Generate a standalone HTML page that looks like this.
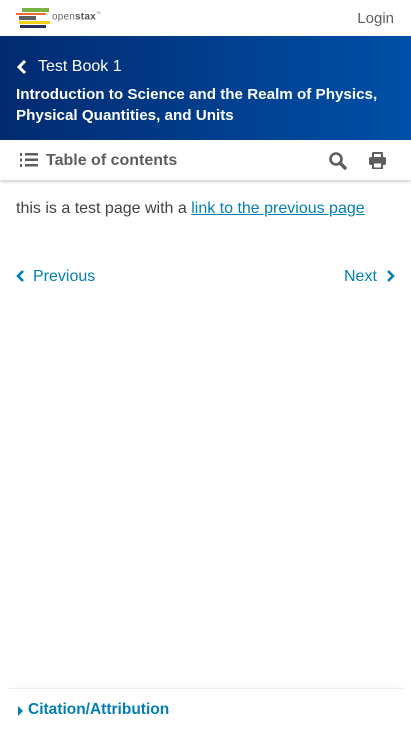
<!DOCTYPE html>
<html><head><meta charset="utf-8"><style>
*{margin:0;padding:0;box-sizing:border-box}
body{width:411px;height:731px;background:#fff;font-family:"Liberation Sans",Arial,sans-serif;position:relative;overflow:hidden}
.top{height:36px;position:relative}
.login{position:absolute;right:17px;top:10px;font-size:15px;color:#5e5e5e}
.os{position:absolute;left:52px;top:11px;font-size:10px;color:#666;letter-spacing:.2px}
.band{position:absolute;top:36px;left:0;width:411px;height:104px;background:linear-gradient(90deg,#022a70,#0050a8);color:#fff}
.bk{position:absolute;left:38px;top:22px;font-size:16px}
.tt{position:absolute;left:16px;top:48px;font-size:15.2px;font-weight:bold;line-height:21px}
.tb{position:absolute;top:140px;left:0;width:411px;height:40px;background:#fff;box-shadow:0 2px 3px rgba(0,0,0,.18)}
.toc{position:absolute;left:46px;top:12px;font-size:16px;font-weight:bold;color:#5e5e5e}
.p{position:absolute;left:16px;top:200px;font-size:16px;color:#424242}
.p a{color:#027eb5;text-decoration:underline}
.nav{position:absolute;top:268px;font-size:16px;color:#027eb5}
.foot{position:absolute;top:688px;left:8px;width:395px;height:1px;box-shadow:0 -3px 6px rgba(0,0,0,.1);background:#eee}
.cit{position:absolute;left:28px;top:701px;font-size:15.5px;font-weight:bold;color:#027eb5}
</style></head><body>
<div class="top">
<svg style="position:absolute;left:15px;top:6px" width="36" height="24">
<rect x="7" y="2" width="27" height="4" fill="#78b042"/>
<rect x="1" y="7" width="30" height="2" fill="#f36b32"/>
<rect x="4" y="10" width="17" height="4" fill="#5f6062"/>
<rect x="4" y="15" width="31" height="3" fill="#f4d019"/>
<rect x="5" y="19" width="26" height="3" fill="#232e66"/>
</svg>
<span class="os">open<b style="color:#555">stax</b><sup style="font-size:5px">™</sup></span>
<span class="login">Login</span></div>
<div class="band">
<svg style="position:absolute;left:16px;top:23px" width="12" height="16"><path d="M9 2 L3 8 L9 14" stroke="#fff" stroke-width="3" fill="none"/></svg>
<div class="bk">Test Book 1</div>
<div class="tt">Introduction to Science and the Realm of Physics,<br>Physical Quantities, and Units</div>
</div>
<div class="tb">
<svg style="position:absolute;left:19px;top:12px" width="20" height="16"><g fill="#5e5e5e"><rect x="6" y="1" width="13" height="2.5"/><rect x="6" y="6.5" width="13" height="2.5"/><rect x="6" y="12" width="13" height="2.5"/><rect x="1" y="1" width="2" height="3"/><rect x="1" y="6.5" width="2" height="3"/><rect x="1" y="12" width="2" height="3"/></g></svg>
<span class="toc">Table of contents</span>
<svg style="position:absolute;left:328px;top:11px" width="20" height="20"><circle cx="8" cy="8" r="5.5" stroke="#5e5e5e" stroke-width="2.6" fill="none"/><path d="M12 12 L17 17" stroke="#5e5e5e" stroke-width="3.5" stroke-linecap="round"/></svg>
<svg style="position:absolute;left:368px;top:11px" width="20" height="20"><g fill="#5e5e5e"><rect x="4" y="1" width="11" height="6" rx="1"/><rect x="1" y="6" width="17" height="8" rx="2"/><rect x="4" y="11" width="11" height="7"/></g><rect x="6" y="12.5" width="7" height="4" fill="#fff"/><rect x="6" y="3" width="7" height="3" fill="#fff"/></svg>
</div>
<div class="p">this is a test page with a <a>link to the previous page</a></div>
<svg style="position:absolute;left:15px;top:269px" width="10" height="14"><path d="M8 2 L3 7 L8 12" stroke="#027eb5" stroke-width="2.6" fill="none"/></svg>
<div class="nav" style="left:33px">Previous</div>
<div class="nav" style="left:344px">Next</div>
<svg style="position:absolute;left:386px;top:269px" width="10" height="14"><path d="M2 2 L7 7 L2 12" stroke="#027eb5" stroke-width="2.6" fill="none"/></svg>
<div class="foot"></div>
<svg style="position:absolute;left:17px;top:705px" width="8" height="12"><path d="M1 1 L6 6 L1 11Z" fill="#027eb5"/></svg>
<div class="cit">Citation/Attribution</div>
</body></html>
